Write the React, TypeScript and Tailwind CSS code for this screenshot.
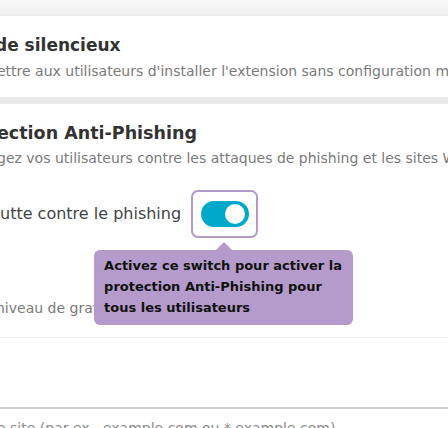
import React from "react";

export default function App() {
  return (
    <div className="w-[448px] h-[428px] overflow-hidden bg-white relative font-['DejaVu_Sans',sans-serif]">
      <div className="h-[16px] bg-gradient-to-b from-[#f9f9f9] to-[#efefef]" />
      <div className="h-[81px] bg-white pt-[18px] whitespace-nowrap overflow-hidden shadow-[0_1px_3px_rgba(0,0,0,0.08)]">
        <div className="-ml-[5px] text-[17px] leading-[22px] font-bold text-[#333]">de silencieux</div>
        <div className="mt-[6px] -ml-[3px] text-[14px] leading-[19px] text-[#7a7a7a]">
          ettre aux utilisateurs d'installer l'extension sans configuration manuelle
        </div>
      </div>
      <div className="h-[7px] bg-[#e9e9e9]" />
      <div className="bg-white whitespace-nowrap overflow-hidden">
        <div className="pt-[18px] -ml-[3px] text-[17.5px] leading-[22px] font-bold text-[#333]">ection Anti-Phishing</div>
        <div className="mt-[5px] -ml-[3px] text-[14px] leading-[19px] text-[#7a7a7a]">
          gez vos utilisateurs contre les attaques de phishing et les sites Web malveillants
        </div>
        <div className="mt-[22px] flex items-center gap-[10px]">
          <span className="text-[16px] leading-[20px] text-[#444]">utte contre le phishing</span>
          <div className="relative">
            <div className="w-[67px] h-[48px] rounded-[7px] border-2 border-[#b39bc8] flex items-center justify-center">
              <div className="w-[48px] h-[26px] rounded-full bg-[#00a9c9] flex items-center justify-end pr-[4px]">
                <div className="w-[20px] h-[20px] rounded-full bg-white" />
              </div>
            </div>
            <div className="absolute left-[-97px] top-[52px] z-10">
              <div className="ml-[122px] w-0 h-0 border-l-[8px] border-r-[8px] border-b-[8px] border-l-transparent border-r-transparent border-b-[#b59bcb]" />
              <div className="w-[259px] h-[75px] rounded-[6px] bg-[#b59bcb] px-[10px] pt-[5px] text-[13px] leading-[21px] font-bold text-[#111] whitespace-normal">
                Activez ce switch pour activer la protection Anti-Phishing pour tous les utilisateurs
              </div>
            </div>
          </div>
        </div>
        <div className="mt-[61px] -ml-[4px] text-[14px] leading-[19px] text-[#7a7a7a]">niveau de gravité</div>
        <div className="mt-[19px] h-px bg-[#f0f0f0]" />
        <div className="h-[69px]" />
        <div className="h-[2px] bg-[#d0d0d0]" />
        <div className="mt-[10px] -ml-[3px] text-[14px] leading-[19px] text-[#8a8a8a]">e site (par ex., example.com ou *.example.com)</div>
      </div>
    </div>
  );
}
